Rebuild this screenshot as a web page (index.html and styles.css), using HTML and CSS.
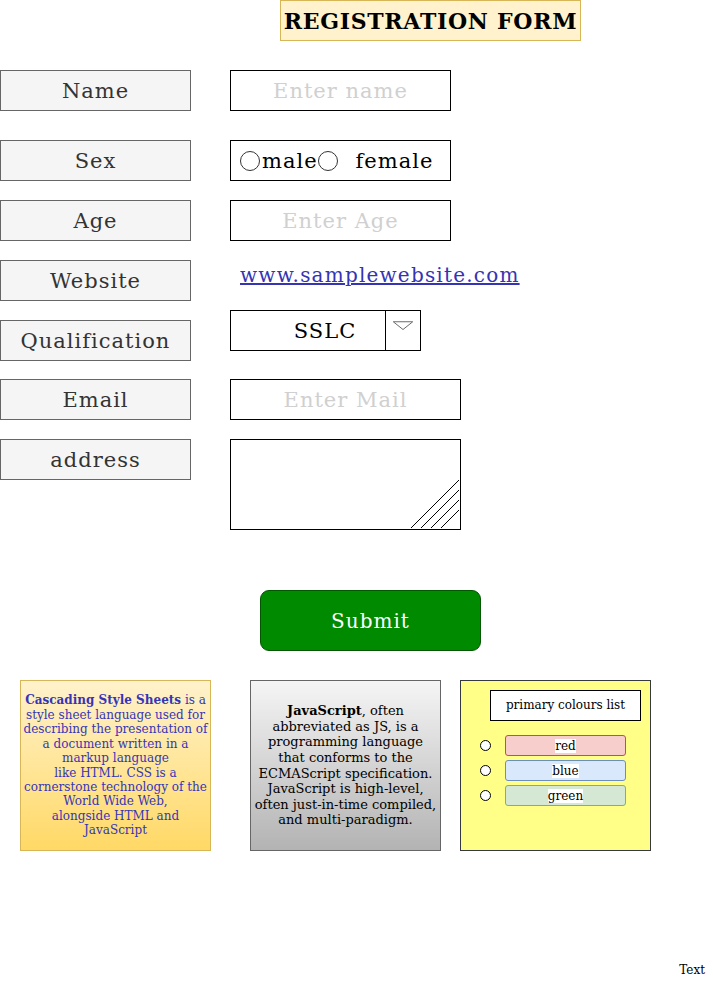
FILE: index.html
```html
<!DOCTYPE html>
<html>
<head>
<meta charset="utf-8">
<link rel="stylesheet" href="styles.css">
</head>
<body>
<div class="page">
  <div class="title-row"><div class="title">REGISTRATION FORM</div></div>

  <div class="row r-name">
    <div class="label">Name</div>
    <div class="field w221 placeholder">Enter name</div>
  </div>

  <div class="row r-sex">
    <div class="label">Sex</div>
    <div class="field w221 sex">
      <span class="radio"></span><span>male</span><span class="radio"></span><span class="female">female</span>
    </div>
  </div>

  <div class="row r-age">
    <div class="label">Age</div>
    <div class="field w221 placeholder">Enter Age</div>
  </div>

  <div class="row r-web">
    <div class="label">Website</div>
    <a class="link" href="#">www.samplewebsite.com</a>
  </div>

  <div class="row r-qual">
    <div class="label label-qual">Qualification</div>
    <div class="select">
      <div class="select-value">SSLC</div>
      <div class="select-btn">
        <svg width="35" height="39" viewBox="0 0 35 39"><polygon points="7.5,10.5 27.5,10.5 17.5,18.5" fill="none" stroke="#666" stroke-width="1"/></svg>
      </div>
    </div>
  </div>

  <div class="row r-email">
    <div class="label">Email</div>
    <div class="field w231 placeholder">Enter Mail</div>
  </div>

  <div class="row r-addr">
    <div class="label">address</div>
    <div class="textarea">
      <svg class="grip" width="50" height="50" viewBox="0 0 50 50">
        <line x1="1" y1="49" x2="49" y2="1" stroke="#000" stroke-width="1"/>
        <line x1="11" y1="49" x2="49" y2="11" stroke="#000" stroke-width="1"/>
        <line x1="21" y1="49" x2="49" y2="21" stroke="#000" stroke-width="1"/>
        <line x1="31" y1="49" x2="49" y2="31" stroke="#000" stroke-width="1"/>
      </svg>
    </div>
  </div>

  <div class="submit-row"><div class="submit">Submit</div></div>

  <div class="cards">
    <div class="card card-css"><p><b>Cascading Style Sheets</b> is a<br>style sheet language used for<br>describing the presentation of<br>a document written in a<br>markup language<br>like&nbsp;HTML. CSS is a<br>cornerstone technology of the<br>World Wide Web,<br>alongside HTML and<br>JavaScript</p></div>
    <div class="card card-js"><p><b>JavaScript</b>, often<br>abbreviated as JS, is a<br>programming language<br>that conforms to the<br>ECMAScript specification.<br>JavaScript is high-level,<br>often just-in-time compiled,<br>and multi-paradigm.</p></div>
    <div class="card card-list">
      <div class="list-title">primary colours list</div>
      <div class="list-items">
        <div class="item"><span class="dot"></span><span class="pill pill-red"><span class="pill-text">red</span></span></div>
        <div class="item"><span class="dot"></span><span class="pill pill-blue"><span class="pill-text">blue</span></span></div>
        <div class="item"><span class="dot"></span><span class="pill pill-green"><span class="pill-text">green</span></span></div>
      </div>
    </div>
  </div>

  <div class="text-row"><span class="small-text">Text</span></div>
</div>
</body>
</html>
```

FILE: styles.css
```css
* { box-sizing: border-box; }
html, body { margin: 0; padding: 0; background: #fff; }
body { font-family: "DejaVu Serif", serif; color: #000; }
.page { width: 713px; height: 981px; overflow: hidden; }

.title-row { display: flex; padding-left: 280px; }
.title {
  width: 301px; height: 41px;
  border: 1px solid #d6b656; background: #fff2cc;
  font-weight: bold; font-size: 22px; letter-spacing: 0.7px;
  display: flex; align-items: center; justify-content: center;
  white-space: nowrap;
}

.row { display: flex; align-items: flex-start; gap: 39px; }
.r-name { margin-top: 29px; }
.r-sex { margin-top: 29px; }
.r-age { margin-top: 19px; }
.r-web { margin-top: 19px; }
.r-qual { margin-top: 9px; }
.r-email { margin-top: 18px; }
.r-addr { margin-top: 19px; }

.label {
  width: 191px; height: 41px;
  background: #f5f5f5; border: 1px solid #666; color: #333;
  font-size: 21px; letter-spacing: 1px;
  display: flex; align-items: center; justify-content: center;
}
.label-qual { margin-top: 10px; }

.field {
  height: 41px; border: 1px solid #000; background: #fff;
  font-size: 21px; letter-spacing: 1px;
  display: flex; align-items: center; justify-content: center;
}
.w221 { width: 221px; }
.w231 { width: 231px; }
.placeholder { color: #d0d0d0; }

.sex { justify-content: flex-start; padding-left: 9px; white-space: pre; }
.radio {
  display: inline-block; width: 20px; height: 20px;
  border: 1px solid #333; border-radius: 50%; background: #fff;
  margin-right: 2px;
}
.female { margin-left: 16px; }

.link {
  font-size: 20px; letter-spacing: 1.2px; color: #3434b4; text-decoration: underline;
  margin-left: 10px; margin-top: 3px; line-height: 24px;
}

.select { display: flex; width: 191px; height: 41px; border: 1px solid #000; background: #fff; }
.select-value {
  width: 154px; font-size: 21px; letter-spacing: 1px;
  display: flex; align-items: center; justify-content: center; padding-left: 34px;
}
.select-btn { width: 35px; border-left: 1px solid #000; display: flex; }

.textarea {
  position: relative; width: 231px; height: 91px;
  border: 1px solid #000; background: #fff;
}
.grip { position: absolute; right: 0; bottom: 0; display: block; }

.submit-row { display: flex; padding-left: 260px; margin-top: 60px; }
.submit {
  width: 221px; height: 61px;
  background: #008a00; border: 1px solid #005700; border-radius: 9px;
  color: #fff; font-size: 20px; letter-spacing: 1px;
  display: flex; align-items: center; justify-content: center;
}

.cards { display: flex; gap: 39px; padding-left: 20px; margin-top: 29px; align-items: flex-start; }
.card {
  width: 191px; height: 171px;
  font-size: 12px; line-height: 14.4px; text-align: center;
  display: flex; align-items: center; justify-content: center;
  white-space: nowrap;
}
.card p { margin: 0; padding: 0; }
.card-css {
  background: linear-gradient(#fff2cc, #ffd966);
  border: 1px solid #d6b656; color: #3535b8;
}
.card-js {
  background: linear-gradient(#f5f5f5, #b3b3b3);
  border: 1px solid #666; color: #000;
  font-size: 13px; line-height: 15.6px;
}
.card-list {
  margin-left: -20px;
  background: #ffff88; border: 1px solid #36393d;
  display: block; padding: 9px 9px 0 0;
}
.list-title {
  margin-left: 29px; width: 151px; height: 31px;
  background: #fff; border: 1px solid #000;
  display: flex; align-items: center; justify-content: center;
  font-size: 12px;
}
.list-items { margin-top: 14px; display: flex; flex-direction: column; gap: 4px; }
.item { display: flex; align-items: center; height: 21px; padding-left: 19px; }
.dot {
  width: 11px; height: 11px; border: 1px solid #000; border-radius: 50%; background: #fff;
}
.pill {
  margin-left: 14px; width: 121px; height: 21px; border-radius: 3px;
  display: flex; align-items: center; justify-content: center;
  font-size: 12px;
}
.pill-text { background: #fff; line-height: 14px; }
.pill-red { background: #f8cecc; border: 1px solid #b85450; }
.pill-blue { background: #dae8fc; border: 1px solid #6c8ebf; }
.pill-green { background: #d5e8d4; border: 1px solid #82b366; }

.text-row { display: flex; justify-content: flex-end; padding-right: 8px; margin-top: 112px; }
.small-text { font-size: 12px; }
```
